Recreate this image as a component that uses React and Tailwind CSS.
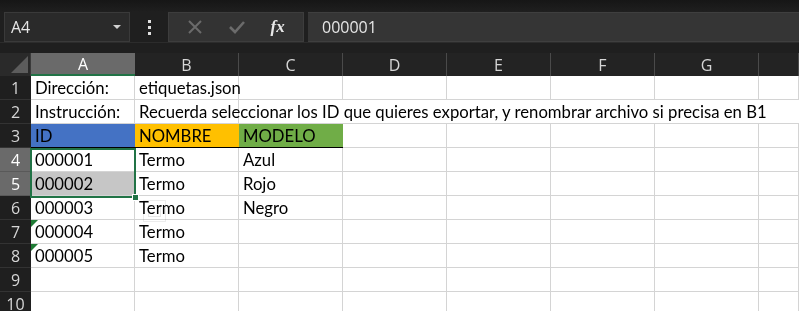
import React from 'react';

const COLS = ['A', 'B', 'C', 'D', 'E', 'F', 'G', ''];

const rows = [
  { n: 1, cells: ['Dirección:', 'etiquetas.json'] },
  { n: 2, cells: ['Instrucción:', 'Recuerda seleccionar los ID que quieres exportar, y renombrar archivo si precisa en B1'] },
  { n: 3, cells: ['ID', 'NOMBRE', 'MODELO'], header: true },
  { n: 4, cells: ['000001', 'Termo', 'Azul'], sel: true },
  { n: 5, cells: ['000002', 'Termo', 'Rojo'], sel: true },
  { n: 6, cells: ['000003', 'Termo', 'Negro'] },
  { n: 7, cells: ['000004', 'Termo'], flag: true },
  { n: 8, cells: ['000005', 'Termo'], flag: true },
  { n: 9, cells: [] },
  { n: 10, cells: [] },
];

const headFill = ['bg-[#4472c4]', 'bg-[#ffc000]', 'bg-[#70ad47]'];

function Cell({ row, ci }) {
  const text = row.cells[ci] || '';
  const isHead = row.header && ci < 3;
  let cls = "relative h-6 flex items-center pl-[4px] pt-[3px] whitespace-nowrap text-[16.7px] text-black font-['Lato',sans-serif]";
  if (isHead) {
    cls += ` ${headFill[ci]} border-b border-black`;
  } else {
    cls += ' bg-white border-r border-b border-[#d4d4d4]';
  }
  if (row.n === 5 && ci === 0) cls += ' !bg-[#c6c6c6]';
  if (row.n <= 2 && ci === 1) cls += ' z-10';
  if (row.n === 2 && ci >= 2) cls += ' border-r-0';
  return (
    <div className={cls}>
      {row.flag && ci === 0 && (
        <span className="absolute left-0 top-0 w-0 h-0 border-t-[7px] border-r-[7px] border-t-[#1e7b34] border-r-transparent" />
      )}
      {text}
    </div>
  );
}

export default function App() {
  return (
    <div className="w-[799px] h-[311px] overflow-hidden bg-[#1f1f1f] font-['Open_Sans','Liberation_Sans',sans-serif]">
      {/* formula bar */}
      <div className="h-[12px] bg-gradient-to-b from-[#161616] to-[#1f1f1f]" />
      <div className="flex items-stretch h-[30px]">
        <div className="ml-[4px] w-[126px] bg-[#2a2a2a] border border-[#3a3a3a] flex items-center justify-between pl-[6px] pr-[8px] text-[16px] text-[#e6e6e6]">
          <span>A4</span>
          <span className="w-0 h-0 border-l-[4px] border-r-[4px] border-t-[4px] border-l-transparent border-r-transparent border-t-[#d0d0d0]" />
        </div>
        <div className="w-[38px] flex flex-col items-center justify-center gap-[3px]">
          <span className="w-[3px] h-[3px] bg-[#e0e0e0]" />
          <span className="w-[3px] h-[3px] bg-[#e0e0e0]" />
          <span className="w-[3px] h-[3px] bg-[#e0e0e0]" />
        </div>
        <div className="w-[136px] bg-[#333333] border border-[#3d3d3d] flex items-center justify-around px-[6px]">
          <svg width="16" height="16" viewBox="0 0 16 16"><path d="M2 2L14 14M14 2L2 14" stroke="#6b6b6b" strokeWidth="2" /></svg>
          <svg width="18" height="16" viewBox="0 0 18 16"><path d="M2 8L7 13L16 3" stroke="#6b6b6b" strokeWidth="2.6" fill="none" /></svg>
          <span className="text-[17px] italic text-[#e8e8e8] font-['Liberation_Serif',serif] font-bold">fx</span>
        </div>
        <div className="ml-[4px] flex-1 bg-[#353535] border-t border-b border-[#3f3f3f] flex items-center pl-[14px] text-[16px] text-[#e6e6e6]">
          000001
        </div>
      </div>
      <div className="h-[11px] border-t border-[#2c2c2c]" />

      {/* grid */}
      <div className="relative">
        <div className="grid grid-cols-[31px_repeat(7,104px)_1fr]">
          {/* column header row */}
          <div className="h-[23px] bg-[#2a2a2a] relative border-r border-[#3a3a3a]">
            <svg className="absolute right-[2px] bottom-[3px]" width="17" height="17" viewBox="0 0 17 17"><path d="M17 0L17 17L0 17Z" fill="#5c5c5c" /></svg>
          </div>
          {COLS.map((c, i) => (
            <div
              key={i}
              className={`h-[23px] flex items-center justify-center text-[16px] ${
                i === 0
                  ? 'bg-[#6a6a6a] text-white border-b-2 border-[#217346]'
                  : 'bg-[#232323] text-[#d6d6d6] border-r border-[#4a4a4a]'
              }`}
            >
              {c}
            </div>
          ))}

          {rows.map((row) => (
            <React.Fragment key={row.n}>
              <div
                className={`h-6 flex items-center justify-center text-[16px] border-b ${
                  row.sel
                    ? 'bg-[#6a6a6a] text-white border-[#595959]'
                    : 'bg-[#1f1f1f] text-[#d6d6d6] border-[#333333]'
                }`}
              >
                {row.n}
              </div>
              {COLS.map((_, ci) => (
                <Cell key={ci} row={row} ci={ci} />
              ))}
            </React.Fragment>
          ))}
        </div>

        {/* selection A4:A5 */}
        <div className="absolute left-[30px] top-[95px] w-[106px] h-[50px] border-2 border-[#217346] pointer-events-none" />
        <div className="absolute left-[132px] top-[141px] w-[7px] h-[7px] bg-[#217346] border border-white" />

        {/* paste options ghost */}
        <div className="absolute left-[143px] top-[147px] w-[23px] h-[22px] border border-[#ececec] flex items-center justify-center mix-blend-multiply">
          <div className="w-[13px] h-[12px] border border-[#e6e6e6]" />
        </div>
      </div>
    </div>
  );
}
